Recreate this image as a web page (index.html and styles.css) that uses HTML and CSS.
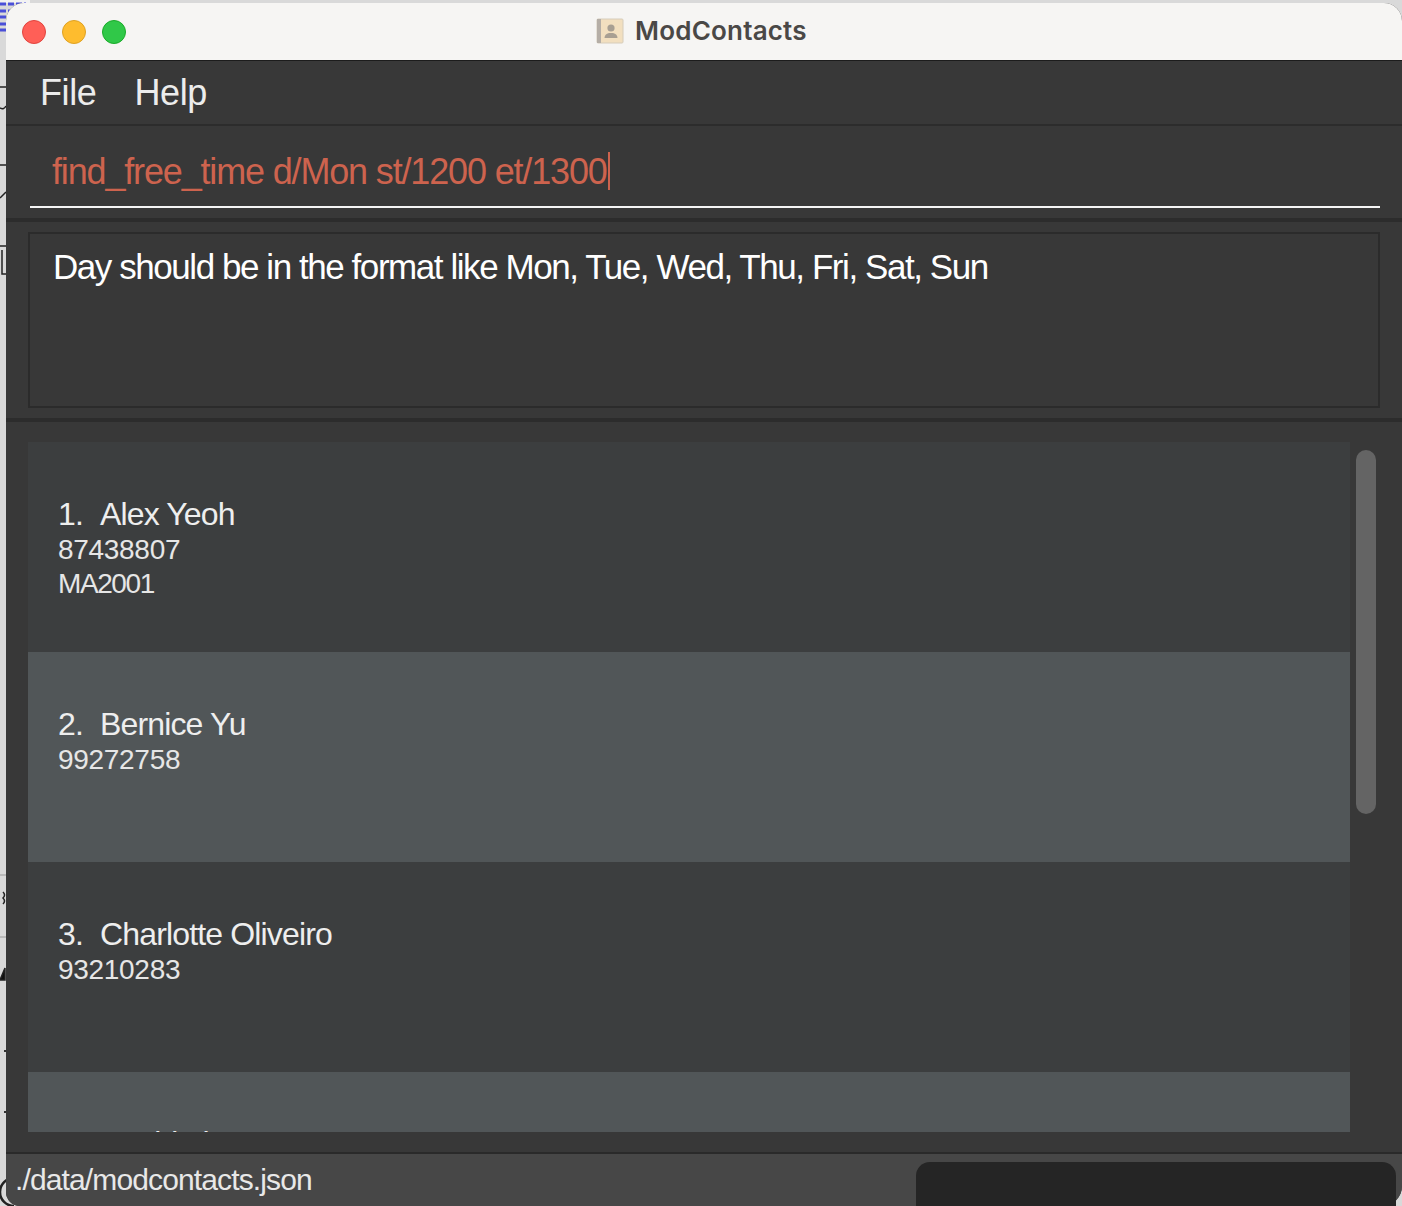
FILE: index.html
```html
<!DOCTYPE html>
<html lang="en">
<head>
  <meta charset="UTF-8" />
  <title>ModContacts</title>
  <link rel="stylesheet" href="styles.css">
</head>
<body>
  <svg class="desktop" width="30" height="1206" viewBox="0 0 30 1206">
    <path d="M60 0H0" stroke="#f2f2f2" stroke-width="6"/>
    <g stroke="#4a4fd8" stroke-width="3" fill="none">
      <path d="M0 4H26M0 11H14M0 17H8M0 24H6M0 30H6" stroke-dasharray="6 2"/>
    </g>
    <g stroke="#222" stroke-width="1.5" fill="none">
      <path d="M0 87H6M0 108q4 2 6-2M0 165H6M0 198l6-6M0 246H6M2 250v24h4"/>
      <path d="M3 892q3 3 0 6q3 3 0 6" />
      <path d="M0 980l5-12v12z" fill="#111"/>
      <path d="M14 1178a12 12 0 0 0 0 28" stroke-width="2.5"/>
    </g>
    <path d="M0 875H6M0 937H6" stroke="#999"/>
    <path d="M5 1050v2M5 1111v2" stroke="#333" stroke-width="2"/>
  </svg>
  <div class="window">
    <header class="titlebar">
      <div class="traffic">
        <span class="dot dot-red"></span>
        <span class="dot dot-yellow"></span>
        <span class="dot dot-green"></span>
      </div>
      <div class="title">
        <svg width="28" height="26" viewBox="0 0 28 26">
          <rect x="1" y="1" width="26" height="24" rx="1" fill="#f2dfbf" stroke="#d6ccba"/>
          <rect x="1" y="1" width="4" height="24" fill="#b5aea6"/>
          <circle cx="15" cy="10" r="3.600" fill="#a89f92"/>
          <path d="M8.500 20q0-4 4.500-5h4q4.500 1 4.500 5z" fill="#a89f92"/>
        </svg>
        <span>ModContacts</span>
      </div>
    </header>
    <nav class="menu">
      <span>File</span>
      <span>Help</span>
    </nav>
    <section class="command">
      <div class="command-input"><span>find_free_time d/Mon st/1200 et/1300</span><i class="caret"></i></div>
    </section>
    <section class="result">
      <div class="result-box">Day should be in the format like Mon, Tue, Wed, Thu, Fri, Sat, Sun</div>
    </section>
    <main class="list-panel">
      <div class="list">
        <article class="cell">
          <h2><span class="idx">1.</span>Alex Yeoh</h2>
          <p>87438807</p>
          <p class="module">MA2001</p>
        </article>
        <article class="cell cell-alt">
          <h2><span class="idx">2.</span>Bernice Yu</h2>
          <p>99272758</p>
        </article>
        <article class="cell">
          <h2><span class="idx">3.</span>Charlotte Oliveiro</h2>
          <p>93210283</p>
        </article>
        <article class="cell cell-alt cell-last">
          <h2><span class="idx">4.</span>David Li</h2>
        </article>
      </div>
      <div class="scrollbar"><div class="thumb"></div></div>
    </main>
    <footer class="status">./data/modcontacts.json</footer>
  </div>
  <div class="dark-tab"></div>
</body>
</html>
```

FILE: styles.css
```css
*,*::before,*::after{box-sizing:border-box;margin:0;padding:0;}
html,body{height:100%;}
body{
  background:#d9d9d9;
  font-family:"Liberation Sans",Arial,sans-serif;
  overflow:hidden;
  padding:3px 0 0 6px;
  position:relative;
}
.desktop{position:absolute;left:0;top:0;}
.window{
  position:relative;
  height:1203px;
  background:#383838;
  border-radius:18px 18px 20px 14px;
  overflow:hidden;
  display:flex;
  flex-direction:column;
}
.titlebar{
  height:58px;
  flex:none;
  background:#f6f5f3;
  border-bottom:1px solid #1c1c1c;
  display:flex;
  align-items:center;
  position:relative;
}
.traffic{display:flex;gap:16px;padding-left:16px;}
.dot{width:24px;height:24px;border-radius:50%;}
.dot-red{background:#ff5f57;border:1px solid #e0443e;}
.dot-yellow{background:#febc2e;border:1px solid #dea123;}
.dot-green{background:#30c848;border:1px solid #1aab29;}
.title{
  position:absolute;
  left:590px;
  top:12px;
  display:flex;
  align-items:center;
  gap:11px;
  font-family:Inter,"Liberation Sans",sans-serif;
  font-weight:600;
  font-size:26px;
  letter-spacing:.2px;
  color:#4a4846;
}
.menu{
  height:65px;
  flex:none;
  display:flex;
  align-items:center;
  gap:38px;
  padding-left:34px;
  font-size:36px;
  letter-spacing:-.4px;
  color:#ececec;
  border-bottom:2px solid #2c2c2c;
}
.command{
  height:96px;
  flex:none;
  padding:0 22px 0 24px;
  border-bottom:4px solid #2c2c2c;
}
.command-input{
  height:82px;
  padding:24px 0 0 22px;
  border-bottom:2px solid #f4f4f4;
  font-size:36px;
  line-height:44px;
  letter-spacing:-1.16px;
  color:#cd634e;
  display:flex;
  align-items:flex-start;
}
.caret{width:2px;height:38px;background:#cd634e;margin:2px 0 0 1px;}
.result{
  height:200px;
  flex:none;
  padding:10px 22px 0 22px;
  border-bottom:4px solid #2c2c2c;
}
.result-box{
  height:176px;
  border:2px solid #2b2b2b;
  padding:11px 0 0 23px;
  font-size:35px;
  line-height:44px;
  letter-spacing:-1.44px;
  color:#fff;
}
.list-panel{
  flex:1;
  min-height:0;
  display:flex;
  padding:20px 0 20px 22px;
  border-bottom:2px solid #2a2a2a;
}
.list{
  width:1322px;
  height:690px;
  overflow:hidden;
  flex:none;
}
.cell{
  height:210px;
  padding:53px 0 0 30px;
  background:#3c3e3f;
  color:#e6e6e6;
}
.cell-alt{background:#515658;}
.cell-last{padding-top:52px;}
.cell h2{
  font-weight:400;
  font-size:32px;
  line-height:38px;
  letter-spacing:-.85px;
  color:#eee;
}
.idx{margin-right:17px;}
.cell p{
  font-size:28px;
  line-height:34px;
  letter-spacing:-.3px;
}
.cell .module{letter-spacing:-1.4px;}
.scrollbar{padding:8px 0 0 6px;}
.thumb{width:20px;height:364px;border-radius:10px;background:#646464;}
.status{
  height:52px;
  flex:none;
  background:#474747;
  padding:6px 0 0 9px;
  font-size:30px;
  line-height:40px;
  letter-spacing:-.87px;
  color:#e8e8e8;
}
.dark-tab{
  position:absolute;
  left:916px;
  top:1162px;
  width:480px;
  height:44px;
  background:#252525;
  border-radius:14px 14px 0 0;
}
```
